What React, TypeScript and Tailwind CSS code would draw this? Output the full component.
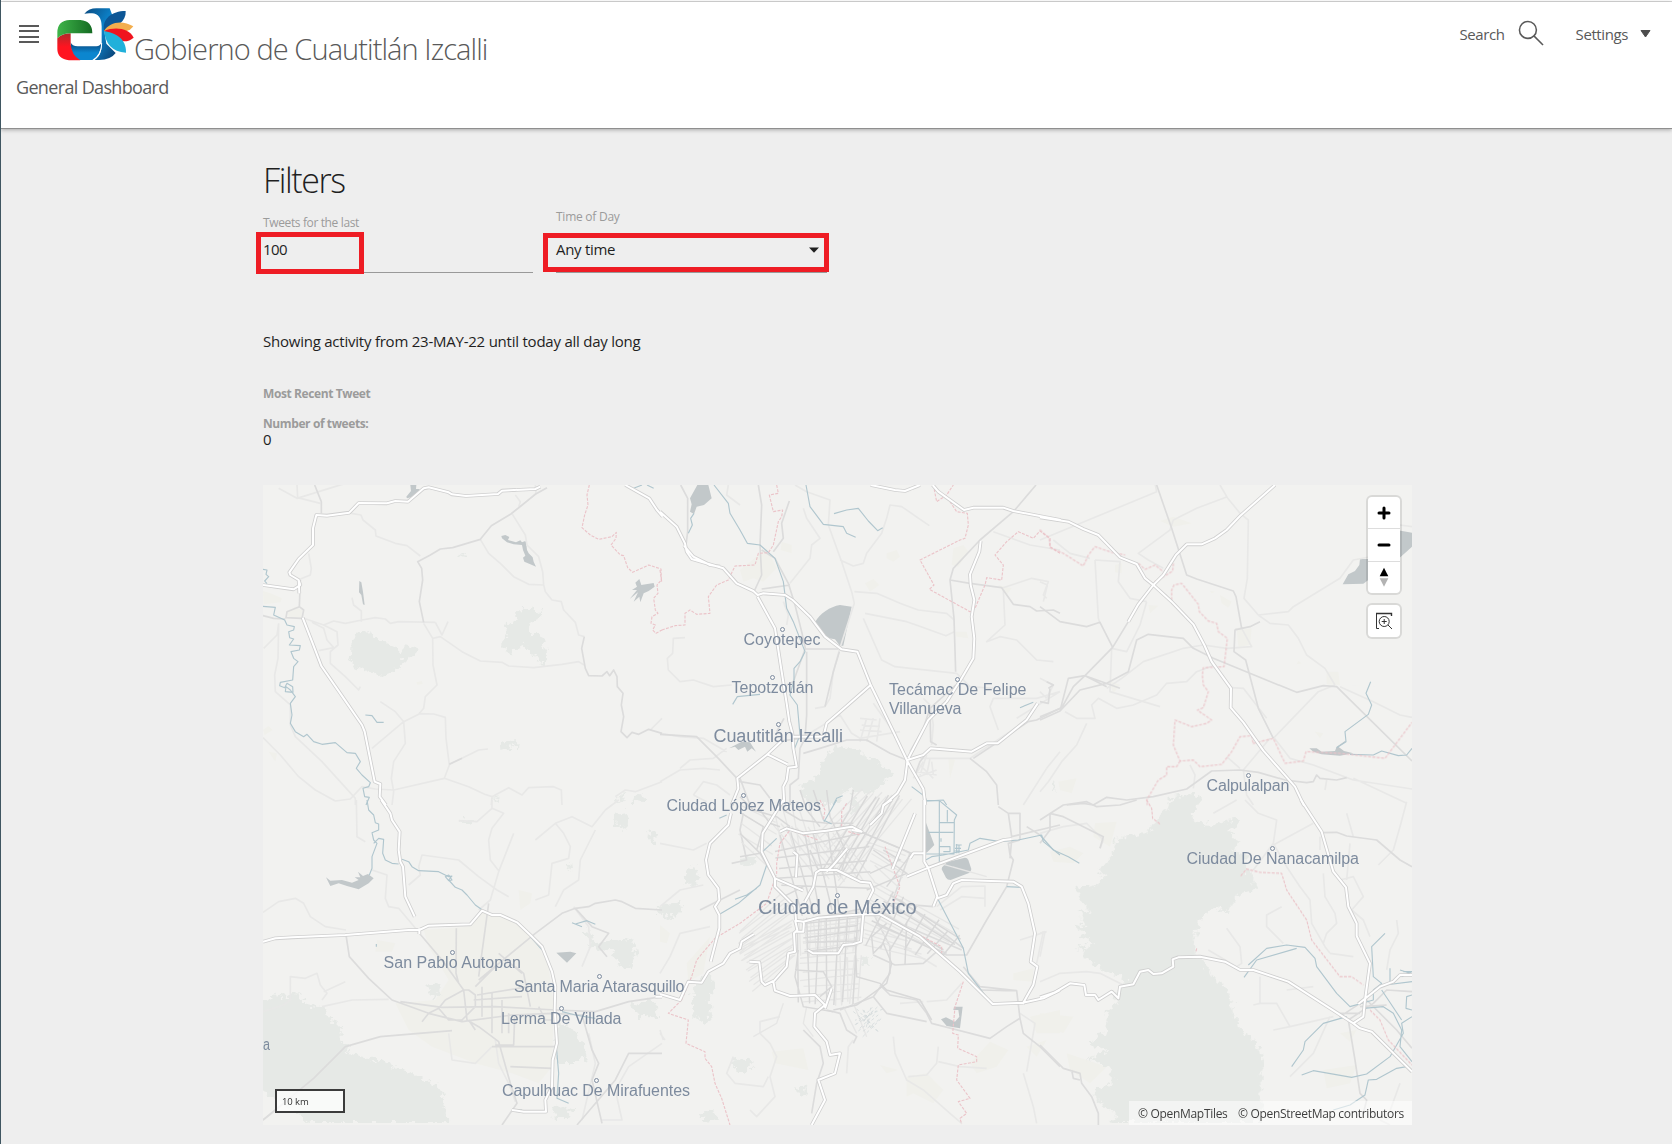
import React from "react";

type Tile = {
  x: number;
  y: number;
  wood?: string[];
  town?: string[];
  water?: string[];
  faint?: string[];
  minor?: string[];
  river?: string[];
  border?: string[];
  major?: string[];
};

/* Map geometry, split in sheets; each sheet is drawn at three units per pixel. */
const TILES: Tile[] = [
  {
    x: 262,
    y: 485,
    wood: [
      "M278 470L295 448L340 445L355 465L410 488L425 505L440 490L458 492L462 482L475 497L475 510L450 518L430 535L405 568L355 578L320 562L275 540Z",
      "M785 385L805 376L848 386L843 405L815 415L812 435L825 455L855 462L860 500L862 543L830 535L820 508L795 485L760 505L745 512L730 498L730 475L745 462L738 435L755 420L770 412L768 392Z",
      "M722 785L735 775L780 771L778 782L745 800L725 803Z",
      "M605 215L615 211L624 217L615 224Z",
      "M1070 950L1090 932L1105 930L1085 955ZM1115 950L1150 930L1155 945L1135 960L1115 960ZM700 948L725 940L715 950Z",
    ],
    town: ["M3 318L25 325L60 340L55 352L5 358Z", "M3 735L20 723L32 735L8 750Z", "M20 800L45 805L40 830Z", "M75 382L100 365L120 375L118 398L80 395Z", "M463 592L480 588L482 597L466 599Z"],
    water: [
      "M445 0H463L462 12L472 12L474 20L462 26L447 37L435 40L433 35L447 18Z",
      "M718 153L730 150L742 156L738 165L762 172L775 166L780 172L790 168L792 172L795 195L800 205L812 217L815 230L822 245L805 238L787 230L783 218L790 212L783 195L780 180L755 178L735 172L720 160Z",
      "M1132 282L1138 300L1175 294L1178 305L1160 318L1145 325L1135 352L1132 335L1115 350L1128 322L1103 342L1125 315L1110 315L1125 305L1120 293Z",
      "M292 288L298 292L303 320L308 360L303 358L298 330L291 322Z",
    ],
    faint: [
      "M268 85L297 90L303 105L340 135L342 153L400 175L435 182L475 213",
      "M655 163L680 205L715 235L755 275L800 298L845 300L842 260L830 215L795 180L790 150L750 86",
      "M845 300L850 320L870 345L898 350L905 375L940 412L950 450L967 455",
      "M125 400L185 420L215 408L250 415L300 405L340 398L370 402L385 415L410 410L520 412",
      "M512 460L535 455L600 500L655 528L720 532L740 543L815 548L900 538L950 530L966 540",
      "M485 415L512 460L513 540L525 600L490 635L485 670L470 688L425 710L330 790",
      "M470 686L515 687L550 697L552 760L562 840L547 880L395 915L340 912",
      "M355 650L400 680L425 710L430 775L395 830L388 880L395 920L390 960",
      "M562 838L600 820L650 795L678 792",
      "M547 880L620 905L668 928L690 935L688 960",
      "M668 928L690 935L740 908L780 930L800 908L875 905L898 915L900 960",
      "M3 758L55 810L110 875L160 915L220 948L265 942L300 905L340 912",
      "M250 -5L105 40L50 10M105 0L107 38L175 55M140 205L148 250L145 270L115 282M185 420L225 440L228 480L205 500L205 535L250 575L290 615L295 605M50 415L45 450L5 490M170 497L215 488L195 465L185 430L150 412",
      "M270 338L275 360L298 378L298 410M820 0L822 25L775 65L748 86M1200 700L1165 735M760 30L775 50L770 65M520 412L540 450L558 410M1060 935L1090 915L1120 920L1200 890",
      "M50 415L48 520L38 570L40 620L85 660L85 720L100 755L180 830L280 940V960",
    ],
    minor: [
      "M855 8L820 28L778 62L748 86L688 122L655 163L572 188L535 192L505 210L467 230L479 250L482 285L472 350L485 412",
      "M967 455L959 490L970 550L980 572L1020 573L1035 560L1043 572L1055 555L1065 575L1066 605L1083 625L1078 660L1085 695L1077 740L1095 758L1110 742L1130 748L1160 733L1200 745",
      "M158 0L178 50V85M115 285L112 365L75 380L72 398L120 400L125 375L112 365M3 392L35 400L70 402",
      "M562 838L600 820",
    ],
    river: [
      "M3 253L15 255L12 268L20 275L8 288L15 296M3 364L40 367L35 390L68 405L75 420L97 425L95 435L80 440L83 458L95 462L82 480L115 482L112 495L87 500L95 520L108 530L95 545L92 585L55 592L53 602L68 608L75 595L92 605L93 622L70 620L72 605L85 615L100 635L85 655L90 690L85 715L100 740L125 755L135 748L155 770L180 778L220 773L255 803L280 805L295 830L283 850L300 870L325 893L320 905L303 910L308 935L322 937L312 960",
      "M310 690L330 692L345 712L365 712",
      "M1115 10L1140 0M1155 0L1175 10",
    ],
    border: [
      "M982 0L975 30L978 60L968 90L960 128L985 150L1010 163L1050 155L1063 142L1062 160L1047 180L1075 210L1085 212L1097 248L1112 262L1160 240L1197 252L1198 285L1185 300L1188 325L1175 340L1180 375L1188 385L1170 395L1167 415L1180 420L1172 435L1182 445L1200 435",
    ],
    major: [
      "M835 5L820 12L720 17L708 27L612 33L570 28L560 22L500 7L485 10L438 50L400 48L375 55L290 54L262 83L195 92L163 90L153 130L153 180L110 222L82 262L85 270L110 285L115 300L95 313L3 300",
      "M110 285L112 325M122 398L150 470L178 543L245 640L300 720L308 740L320 800L338 890L355 897L353 935L372 960",
      "M1090 0L1115 14L1162 40L1185 75L1202 95",
    ],
  },
  {
    x: 660,
    y: 485,
    wood: [
      "M425 905L470 890L490 850L508 815L540 783L570 795L605 800L635 825L665 822L668 845L710 870L680 885L690 900L655 915L640 935L590 925L560 925L545 960L460 960L435 930Z",
      "M1195 890V930L1185 905Z",
    ],
    town: [
      "M240 255L320 190L350 250L310 290L280 280L250 290Z",
      "M365 170L395 180L395 205L362 195Z",
      "M680 205L710 195L720 215L700 230L680 220ZM880 190L910 180L925 200L895 245L875 240ZM615 295L640 282L658 300L630 320ZM1015 300L1055 310L1040 330ZM885 440L920 440L925 460L890 455ZM865 820L885 825L870 880Z",
    ],
    water: [
      "M112 0H145L155 40L132 60L110 65L102 87L90 80L95 58L90 40Z",
      "M465 412C480 385 510 365 540 360L575 365L550 482L540 483L525 463L497 458Z",
      "M207 790L245 770L270 772L288 800L275 790L262 800L255 785L235 795L225 785Z",
    ],
    faint: [
      "M405 0L440 20L510 45L505 120L545 230L575 320L583 355L538 495L520 560L510 640L495 665L465 670",
      "M540 225L580 243L610 235L620 205L665 145L680 100L690 60L725 65L808 122",
      "M583 320L650 325L720 355L775 375L860 385L883 405",
      "M615 385L740 410L858 452L883 440",
      "M0 745L60 755L130 760L200 800",
      "M75 458L40 460L38 505L22 520L25 555L60 590L100 585L160 605L215 600",
      "M610 400L665 525L705 545L890 565L930 605L1000 610M1015 735L990 665L1000 640L1130 640L1200 620M1070 700L1200 620M790 640L810 660L820 720L815 780",
      "M440 750L540 690L575 745L600 760L720 740M600 700L650 705M605 720L660 725M620 700L600 770M640 700L620 770M660 700L650 770M600 735L665 740M640 655L700 740",
      "M1000 140L1110 180L1200 195M1025 310L1115 280L1165 290L1150 330L1160 340M1030 315L1035 420L980 470L1020 455L1070 465L1130 525L1180 530M780 820L930 820L1080 720M1160 850L1090 960M1200 800L1160 850M0 890L60 855L130 850L180 855M60 850L90 825L160 820L200 790",
      "M205 0L200 30L240 60M430 70L440 100L480 160L455 180L450 220L390 295M380 420L385 390L370 350M780 840L820 880M790 830L760 880M800 810L780 870M810 820L800 870M815 830L820 870M770 860L830 870M765 880L830 855M100 930L130 890L170 900L210 930M100 930L140 950",
    ],
    minor: [
      "M62 0L83 40V140L78 180M295 0L305 60L300 180L305 270L283 318",
      "M305 195L345 220L385 295L405 360L425 440L436 490L400 590L380 600",
      "M388 48L365 115L370 160L340 200M305 312L390 300",
      "M1128 0L1060 80L960 165L880 250L870 285L882 400L887 560M870 285L930 295L1025 308L1060 358L1110 365L1130 378L1180 375L1200 385",
      "M887 600L810 670L790 730L750 800M810 670L812 770L830 780",
      "M436 492H535M440 500V690L435 760L420 790L415 880L390 900V960",
      "M430 805L480 790L560 765L620 765L690 805L740 825",
      "M810 790L780 830L765 870M930 820L980 860L1010 900L1015 960M940 820L1000 780L1105 710L1130 705L1200 670",
      "M0 748L110 755L175 820L240 890L300 900L330 940M240 880L270 960M350 770L420 760M372 700L350 740",
      "M495 665L520 560L538 500",
    ],
    river: [
      "M438 0L450 65L490 118L550 125L560 145L587 157M522 86L560 75L595 70L625 108L653 137L668 128",
      "M162 0L205 55L210 85L240 135L262 175L300 180L345 220L370 290L380 370L400 410L435 500L420 530L402 550V585L390 630L412 660L420 750L400 800L405 825",
      "M102 85L92 100L97 120L85 145M218 658L232 635L300 628M1080 668L1120 652M520 960L530 940L548 932M755 905L795 935L800 948L850 945L860 960",
    ],
    border: [
      "M350 0L355 25L328 30L340 80L368 75L365 95L355 110L340 180L325 203L295 205L285 240L225 243L205 285L170 300L145 335L150 385L110 388L90 375L75 385V420L45 422L0 437",
      "M820 0L830 50L860 30L880 0M870 50L890 80L922 85L925 120L915 160L900 165L780 225L822 300L808 313L930 380L945 370L975 300L980 278L1025 285L1030 240L1005 210L1040 170L1075 140L1120 160L1140 138L1170 160V185L1200 205",
      "M0 255L5 290",
    ],
    major: [
      "M0 80L50 125L75 175L80 200L95 222L190 250L230 295L280 318L293 330L310 325L375 330L398 345L450 395L495 455L545 493L592 500L632 600L700 740L742 828L790 912L796 960",
      "M72 182L100 215L150 240L180 245",
      "M293 335L345 430L365 560L380 655L388 710L397 745L400 790L410 845L385 848L380 885L370 905L373 960",
      "M368 765L320 810L232 880L235 910L215 960M322 808L383 838M395 755H490L500 715L535 685L632 600",
      "M632 0L705 15L735 18L780 0M818 0L835 20L912 75L940 68H1030L1060 78L1202 105",
      "M962 168L958 200L930 268L932 300L943 345L935 395L943 460L940 520L905 580L860 650L805 705L745 820",
      "M742 825L790 810L812 790L935 800L980 775H1013L1100 705L1133 655",
      "M742 830L735 885L712 925L670 962",
    ],
  },
  {
    x: 1040,
    y: 485,
    wood: ["M395 955L410 942L470 932L485 955L470 960H395Z"],
    town: [
      "M360 108L400 95L455 115L400 125ZM225 240L245 235L245 265L225 262ZM325 360L355 362L330 385ZM590 435L635 430L630 480L595 485ZM540 330L575 350L565 368L545 355ZM860 560L895 560L900 600L1015 605L860 598ZM55 890L110 880L95 925L60 915ZM825 740L850 745L840 760ZM510 318L525 320L515 325ZM775 528L785 535L770 538Z",
      "M205 585L240 600L220 625Z",
    ],
    water: [
      "M908 298L925 268L945 258L958 240L960 222H1050V290L985 285L970 296Z",
      "M1070 135L1116 143V185L1075 222Z",
      "M808 790L830 790L845 800L885 798L890 785L915 768L918 770L895 785L912 798L940 805L900 812L845 808L820 800Z",
    ],
    faint: [
      "M345 -5L350 20L0 165M540 0L562 38L600 85L625 105L622 280L612 340L655 390M562 35L470 70L400 105L390 135L295 205L325 225L370 250",
      "M655 390L745 380L760 365L900 280L940 225L1020 210M655 390L690 415L745 420L775 460L800 510L855 550L885 600M585 432L605 430L635 485L560 490L490 480L430 490L310 530L245 580L200 610",
      "M165 225L175 400L180 415M165 225L240 230L235 290L270 340L320 350M0 290L22 300L10 350M150 220L90 205L40 165M320 350L300 420L260 500L215 490L210 620L360 665",
      "M525 540L470 560L440 590L380 595L350 630L280 660L230 670L175 640L155 660L165 700L110 700L75 680M140 715L110 780L65 830L25 890L0 920M885 600L835 620L700 760M900 605L1000 650L1080 690L1116 697M700 755L750 820L820 840L940 885L1116 912M575 608L610 610L680 700M690 760L610 855L620 930L640 960M450 840L465 870L460 910M855 915L860 885M940 880L1100 955",
      "M1080 120L1116 125M0 580L40 600L20 640M0 620L20 640M560 815L600 850",
    ],
    minor: [
      "M350 0L395 130L440 270L470 282L580 318L588 335L605 430L585 435L582 500L617 525L655 670L700 760",
      "M605 430L630 425L660 410M0 365L60 410L140 425L180 412L218 487L265 410M218 487L135 572L85 580L62 670L0 695",
      "M0 705L60 678L120 615L200 595L265 560L290 465L325 448L430 460L460 490L520 520L770 622L850 602L890 605L1116 828",
      "M135 572L100 605L60 678M135 572L240 610M135 572L200 605",
      "M80 960L130 955L160 960L200 937L260 945L340 935L440 912L515 858L600 855L655 862L735 885L800 893L820 890L830 870L840 880L890 885L920 878",
      "M25 610L40 600L20 590M0 650L25 655L30 610",
    ],
    river: [
      "M992 590L978 625L995 660L985 688L915 740L918 770L890 788M930 808L1000 810L1025 798L1075 812L1100 810L1116 790",
    ],
    border: [
      "M0 135L28 160L30 188L70 205L130 243L145 210L165 185L215 202L255 210M295 235L315 253L345 240L370 260M400 235L398 258L345 290L342 300M395 345V315L402 300L425 295L475 358L478 380L505 408L530 415L535 440L562 460L552 545L490 548L487 570L490 600L505 620L490 668L472 675L515 705L500 715L455 725L405 705L400 780L420 828L460 825L480 845L545 838L575 800L600 755L635 752L640 778M420 828L410 845L380 845V870L355 885L320 945L322 960",
      "M640 775L700 760L735 835L790 828L798 800L900 805L1035 820L1116 712",
    ],
    major: [
      "M0 97L85 110L130 132L175 150L240 217L290 237L315 280L340 300L395 350L460 418L493 480L515 530L573 610L572 668L610 712L670 797L765 905L792 962",
      "M705 0L600 93L560 135L525 160L485 178H440L408 210L370 270L340 300L295 358L265 410",
    ],
  },
  {
    x: 262,
    y: 800,
    wood: [
      "M3 610L30 600L55 590L80 595L105 585L150 620L195 625L200 650L245 690L245 730L270 745L260 765L310 775L370 790L450 825L500 845L545 870L560 935L562 975H155L3 870Z",
      "M890 675L935 690L975 740L985 780L960 795H895L888 760Z",
      "M600 68L625 60L652 68L635 80L612 76ZM965 400L990 390L1000 425L1015 440L1065 420L1120 430L1130 470L1110 510L1080 505L1060 460L1015 455L980 445L1000 440ZM1120 620L1180 600L1200 640V670L1160 650L1140 670ZM925 190L940 195L942 220L925 210ZM1170 100L1190 110L1188 140L1168 130ZM880 930L915 920L945 935L925 960L885 960ZM500 560L545 555L540 590L520 600ZM1060 50L1110 45L1105 90L1070 85Z",
    ],
    town: [
      "M485 390L620 380L660 335L760 360L820 420L860 500L875 620L870 800L830 850L750 820L640 790L510 740L440 690L400 610L520 600L560 540L500 440ZM345 420L400 430L390 455L340 455Z",
      "M770 270L810 280L805 310L775 330Z",
    ],
    water: [
      "M192 232L205 242L240 240L270 248L290 240L278 232L295 232L288 215L303 228L318 222L335 235L320 250L290 268L255 258L230 250L205 258Z",
      "M883 458L925 455L943 460L915 488Z",
    ],
    faint: [
      "M3 337L50 305L100 295L125 310L145 350L190 380L252 390M283 0L285 110L310 125M330 210L375 225L370 295L380 320L410 325L465 390M470 200L480 165L590 180L650 230L705 270L740 290",
      "M690 0L690 25L645 65L590 62M690 25L725 40L690 85L680 120L685 180L710 212M755 100L710 215L685 300L650 330M820 300L860 285L870 190L920 175L925 140L905 100L880 70L930 50L990 80L1030 30L1070 0M880 320L905 270L950 240L955 180L1000 90M880 70L820 120",
      "M3 635L65 615L85 600L85 530L130 535L165 520L175 555L195 580L180 600M180 620L270 600L380 598M185 575L250 545M440 255L475 225L470 200",
      "M250 740L155 835L120 870L3 960M700 720L710 790L740 850L760 905M935 320L980 380L985 440L960 500M1200 730L1100 800L1060 870L1080 960L1020 960M980 700L1000 790L960 960M560 700L570 780L640 790L690 740",
    ],
    minor: [
      "M472 400L540 480L605 570L615 660L650 680L710 725L745 850L765 910L720 975M650 540L820 400L900 340L940 325L980 320L1000 310L1060 300L1080 305L1120 325L1200 330",
      "M252 405L262 470L320 535L390 600L500 640L600 665L750 645L870 640M415 605L540 622L700 620L880 630L1000 635L1100 605L1200 590",
      "M605 570L550 600L530 625L560 660L600 660L640 620V585L620 570ZM645 585L800 560M760 500L785 520L805 620M3 960L155 835L250 740L355 710L570 692M480 665L500 640L530 625M620 660L640 690M700 735H755L758 650M690 740L760 740H880M745 800L870 805M583 385L582 520L590 550M650 530L680 310M710 460L780 520",
      "M870 640L960 645L990 750L1010 790L990 840L1020 970M1200 760L1100 760L1060 840L945 975M635 600L780 590M660 560V650M690 580V700M720 600V700M740 640V700M830 620L850 660H870M640 560L700 500",
      "M940 325L990 380L1040 400L1010 440L1035 470",
    ],
    river: [
      "M315 0L320 30L335 45L340 68L350 72V90L330 98L335 120L345 130L330 170V205L322 225M335 130L350 115L365 118L362 160L370 180L390 190L410 192M420 178L440 185L450 200L470 212L530 215L560 230L570 228L560 240L580 262L600 270L615 285L640 315L658 328M550 230L560 225L570 240L560 242Z",
      "M930 368L960 380M940 372L975 362L1000 373M805 410L840 450M883 740L890 820L885 895L920 910M343 432V440M900 635L940 645L1000 655M750 930L780 930",
    ],
    major: [
      "M358 0L385 40L390 60L413 95L410 150L415 185L423 200L430 290L458 350",
      "M3 425L40 415L90 412L250 405L440 390L472 390L500 377L625 373L660 332L690 345H715L765 367L805 405L840 440L870 515L880 560L878 630L885 730L872 780L870 860L850 900L852 935H785L750 930M472 385V402",
      "M1180 590H1200",
    ],
  },
  {
    x: 660,
    y: 800,
    wood: [
      "M115 555L140 530L168 540L172 585L155 610L160 660L135 675L110 650L105 600Z",
      "M245 180L290 175L300 200L265 205ZM90 215L115 200L125 260L80 260ZM5 320L70 312L75 340L40 360L3 345ZM225 785L260 780L295 795L265 825L235 815ZM415 870L445 865L440 890L420 885ZM610 480L635 478L635 500L615 500ZM580 0L605 0L608 35L585 40ZM130 950L160 935L190 960L150 975Z",
    ],
    town: ["M335 755L430 745L445 810L345 790ZM740 830L800 820L850 870L820 910L760 880L740 890ZM660 795L715 810L680 820ZM930 790L990 725L1045 750L1010 800L950 820ZM1110 650L1200 630V700L1130 700ZM1100 740L1160 720L1130 770ZM80 490L150 410L130 520L85 545ZM1060 520L1120 505V545L1060 540ZM0 375L30 400L20 430L0 425Z"],
    water: [
      "M797 65L823 135L800 158L793 155Z",
      "M862 186L915 173Q922 173 925 180L934 207Q934 214 927 219L872 240Q862 240 858 233L845 208Q845 200 850 198Z",
      "M882 620L908 620L900 685L860 678L843 658L858 652L885 665L898 650L895 630L880 630Z",
    ],
    faint: [
      "M0 130L100 150L140 130M0 320L60 270L130 255M0 520L30 470L60 400L150 380M360 650L300 665V700L330 730L350 770L330 830L345 890L290 950L270 930M0 690L10 720M220 770L200 820L225 850L310 860L325 830M700 710L705 760L740 840L790 870L870 940L905 970M745 830L800 825L830 790L835 740M835 785L900 800L980 805M560 820L565 740L580 720",
      "M730 440L830 500M830 320L905 260L975 258V320M840 330L905 290L975 295M1090 820L1120 920L1130 970M1100 815L1125 670L1080 640M1150 395L1130 490M1080 420L1160 395M0 700L15 720",
      "M800 605L860 600L905 550M720 610L790 605",
    ],
    minor: [
      "M1080 120L1045 130L1050 165L1060 180L1040 260L980 360L920 465L860 465L830 455L790 490L705 495L640 465",
      "M590 90L720 145L750 160L700 295L720 300L910 445M1015 20L1045 40L1055 110L1200 75M1045 40H1080V120M540 630L640 590L690 520V440L640 340M660 555L690 585L770 600L800 640L815 670L990 715L1040 680L1080 655",
      "M910 500L960 560L1070 572L1080 655L1090 700L1140 740L1180 780L1200 800M1070 572H1040L960 570M640 590L680 640L800 665",
      "M430 690L480 740L490 790L470 850L455 940M500 630L540 640L560 690L590 710L580 730M120 330L240 270M215 190L260 180L240 90L250 40",
      "M1050 175L1055 120M1140 105L1100 80M660 345L905 450M650 375L860 460M640 340L700 310L820 320",
    ],
    river: [
      "M795 2H838L890 45L883 60L882 162H797M838 2V188M838 68H883M805 97H880M843 115V125M837 140H870V155H850M862 30V65M887 135H905M885 145H903M883 153H900M890 132V160M897 135V160M797 180L815 170L850 165L925 150L930 130L960 115L1020 125L1075 120L1145 105L1150 125L1200 165M835 300L910 445L925 520L990 605M1040 260L1085 262",
      "M180 342L235 310L300 255L320 195M308 155L350 115M225 298L260 285L290 265M492 65L530 0M490 60L515 72M178 55L200 45",
    ],
    border: [
      "M65 600L25 640L85 660L78 730L135 755V775L155 800L165 850L185 895L210 975M65 600L95 530L110 480L165 415L240 370L320 310L350 220L350 190L360 130L390 90L475 120M480 0L495 30L490 60M545 80V35L560 10M565 95L600 105M675 140L720 260L700 310M730 380L845 440V460M910 545L885 620L878 700L895 705L893 745L950 770V785L895 795L890 840L930 895L895 905L920 940L900 955L905 972",
    ],
    major: [
      "M213 40L205 75L150 130L138 180L145 225L175 265L178 300L165 320L178 345V385L152 485",
      "M370 0L308 100L305 155L345 235V260L405 320L408 362L430 365L475 353L605 343L660 343L780 410L900 515L998 612L1090 608L1150 595L1200 570",
      "M345 235L430 272M360 95L380 85L430 100L500 92L575 80L605 95L575 90M630 75L665 40L670 15L695 0M400 155L412 165L408 232M500 215L520 195L562 145M765 40L697 208M740 230L800 205L1030 120L1055 117M793 0V185L805 205L832 290L820 320M832 295L860 285L880 250L905 240L1060 245L1085 260L1105 310L1125 400L1112 485L1132 500L1120 555L1100 590L1088 612M750 175L760 160H790",
      "M435 305L460 260L468 218L480 210H530L560 225L600 245L630 248L640 270L625 300L610 340L603 425L580 432L550 435L535 460H460L443 450M405 360L412 390L402 400L405 455L385 460L380 500L340 545L345 572L390 588L465 585L495 615L465 640L463 680L500 725L510 765L540 760L525 820L475 840L495 900L455 975M515 565L495 625M405 395H430L432 365M0 582L60 600L85 545L125 548L145 515L190 490L210 460L240 445L245 425L282 402M268 485L298 487L305 545L315 555L340 543",
    ],
  },
  {
    x: 1040,
    y: 800,
    wood: [
      "M360 72L400 10L415 0H490L465 60L485 75L550 80L575 65L605 62L605 85L570 100L610 130L590 160L625 170L625 215L655 235L650 275L600 290L575 340L530 330L485 370L480 400L470 440L475 475L500 485L520 530L560 560L580 600L590 650L620 700L660 735L680 790L670 850L680 975H220L240 950L180 905L170 880L230 860L225 810L145 780L210 760L150 735L205 700L210 650L200 640L235 620L230 590L270 550L170 500L120 450L165 440L110 380L150 385L120 340L165 350L110 270L170 265L205 235L180 215L215 190L245 115L330 105Z",
    ],
    town: ["M165 70L230 65L210 140L160 110ZM30 155L90 140L130 160L100 190L40 185ZM0 640L100 650L70 700L0 670ZM80 760L200 800L150 850L90 810ZM850 810L950 795L930 850L860 865ZM900 700L950 690L930 725Z"],
    faint: [
      "M0 545L60 520L140 515L180 520L250 555M0 100L70 80L140 70L190 120L180 145M615 0L655 40L710 60L700 130L640 210M820 70L700 135M700 130L740 200L780 260L810 300L815 370L855 440L870 460M725 320L680 345L680 380L730 430M850 430L860 400L890 370L885 340L855 290L850 220M900 240L940 230L970 290L935 330L970 360L990 410M505 450L590 500L605 490L600 440L560 385M660 530L660 610L640 615M660 610L710 610L750 680L880 650M750 680L700 690",
      "M1100 5L1080 80L1060 150L1015 195M1070 360L1075 400L1050 450L1040 510M840 150L840 110M930 130L920 240M920 40L940 110M520 40L590 0M0 400L15 395L0 470M870 650L820 760L750 830M1020 960L1050 975M1080 850L1040 960",
      "M870 460L940 470M820 560L740 570",
    ],
    minor: [
      "M0 60L70 15L140 5L170 20L240 15L290 0M0 130L30 90L30 40M30 40L70 50L190 110L180 145",
      "M850 98L890 97L920 108L1010 120L1080 180L1116 200M0 735L70 805L120 820L125 850L155 890L175 940V975M95 810L100 835L120 840",
      "M925 660L945 780L960 880L980 900L970 940M960 610L900 650L925 660L1000 610L1040 570L1116 575M980 600L1070 690L1116 745M960 620L1040 615M900 640L960 640",
    ],
    river: [
      "M0 105L40 150L85 170L118 190M612 532L650 480L770 445M625 495L680 445L740 435L795 442L825 475L830 500L890 580L930 620L1000 600L1000 570L1025 550L1000 530L995 440L1035 400M755 800L790 750L795 725L850 670L920 650M785 825L820 812L935 832L980 822L1050 770L1090 700L1085 670L1116 650M970 625L1030 620L1060 640L1085 690L1080 740L1116 785M1025 570L1085 660M1116 585L1100 590L1098 625L1116 630M1050 505V550M1035 555L1116 545M1090 515H1116L1085 530M880 930L930 915L975 885L985 840L1010 838L1070 805L1100 800M1080 510L1110 520",
    ],
    border: [
      "M320 0L335 25L338 55L360 72M602 228L620 207L660 217L725 220L740 270L800 360L815 420L900 530L935 530L970 555M990 630L1020 660L1045 720L1116 795M470 445L468 455",
    ],
    major: [
      "M783 0L845 95L880 215L918 262L925 320L950 370V408L990 490L975 600L970 650L940 670",
      "M0 592L45 577L90 550L133 555L138 585H165L175 600L215 575L235 595L240 560L280 553L300 515L325 510L340 522L365 520L400 500L398 478L415 472L480 470L555 485L600 510H640L745 545L940 670L960 685L995 695L1116 815",
      "M955 612L1020 560L1060 545L1080 525H1116",
    ],
  },
];

const line = (x1: number, y1: number, x2: number, y2: number) => `M${x1} ${y1}L${x2} ${y2}`;
const spread = (n: number, a: number[], b: number[]) =>
  Array.from({ length: n }, (_, i) => {
    const t = i / (n - 1);
    const m = a.map((v, k) => v + (b[k] - v) * t + Math.sin(i * 3.7 + k * 1.9) * 5);
    return line(m[0], m[1], m[2], m[3]);
  }).join("");

/* Urban street mesh of the capital. */
const STREETS_DARK = [
  spread(7, [172, 390, 178, 640], [355, 370, 335, 640]),
  spread(6, [195, 385, 365, 360], [195, 480, 350, 470]),
  spread(6, [245, 240, 385, 20], [350, 260, 480, 20]),
  spread(5, [120, 130, 190, 380], [260, 130, 300, 360]),
  spread(5, [105, 180, 380, 130], [120, 290, 390, 290]),
  spread(7, [460, 300, 380, 470], [660, 440, 600, 500]),
  spread(4, [450, 310, 665, 450], [400, 390, 590, 490]),
  "M260 0L270 80L320 190L300 260M360 125L515 190L440 290M175 480L165 560L190 650L250 660L280 665M280 660L350 645L440 580L455 520L430 460L400 490L395 440L440 400M345 440L350 560L420 580L440 600L540 630L575 690M500 395L495 525M0 130L60 190L100 260M5 70L70 110L50 180M0 200L60 190M130 320L190 290M380 300L500 250L400 180M390 250L480 210L430 180M165 540L250 545L275 590L240 620",
  "M0 20L40 60L110 80L150 110M60 60L90 100L120 110M130 60L180 90L260 100L340 100M180 0L200 60L240 110M210 180L235 240M220 0L250 90M340 0L330 60L300 110",
];
const STREETS_LIGHT = [
  spread(13, [178, 390, 185, 500], [365, 370, 350, 480]),
  spread(9, [190, 385, 365, 365], [190, 490, 350, 470]),
  spread(11, [0, 470, 150, 400], [40, 600, 165, 500]),
  spread(8, [0, 420, 130, 310], [0, 510, 160, 400]),
  spread(9, [230, 130, 370, 0], [300, 290, 510, 30]),
  spread(9, [100, 100, 230, 260], [300, 130, 400, 280]),
  spread(7, [180, 500, 350, 490], [190, 640, 360, 620]),
  spread(7, [290, 500, 290, 650], [365, 500, 350, 630]),
  spread(5, [380, 150, 500, 200], [400, 230, 480, 290]),
  spread(6, [400, 270, 660, 420], [380, 360, 600, 490]),
  spread(5, [100, 40, 130, 180], [200, 30, 240, 180]),
  spread(5, [0, 40, 110, 100], [0, 160, 90, 230]),
  spread(5, [370, 460, 560, 510], [370, 400, 480, 440]),
  "M130 640L110 700L40 740M200 650L190 700L220 740M310 650L350 730M340 640L380 740M600 220L740 260",
];
const WETLAND = spread(8, [340, 660, 420, 730], [425, 655, 350, 690]) + spread(6, [345, 700, 400, 655], [370, 735, 425, 690]);

const PLACES: { t: string; x: number; y: number; w: number; s: number; cx?: number; cy?: number }[] = [
  { t: "Coyotepec", x: 743.5, y: 645, w: 77, s: 16, cx: 782.5, cy: 629.5 },
  { t: "Tepotzotlán", x: 731.5, y: 693, w: 82, s: 16, cx: 772.5, cy: 677.5 },
  { t: "Cuautitlán Izcalli", x: 713.5, y: 742, w: 129.5, s: 18, cx: 778.5, cy: 724.5 },
  { t: "Tecámac De Felipe", x: 889, y: 695, w: 137.5, s: 16, cx: 957.5, cy: 679.5 },
  { t: "Villanueva", x: 889, y: 714, w: 72.5, s: 16 },
  { t: "Calpulalpan", x: 1206.5, y: 791, w: 83, s: 16, cx: 1248.5, cy: 775.5 },
  { t: "Ciudad López Mateos", x: 666.5, y: 811, w: 154.5, s: 16, cx: 743.5, cy: 795.5 },
  { t: "Ciudad De Nanacamilpa", x: 1186.5, y: 864, w: 172.5, s: 16, cx: 1272.5, cy: 848.5 },
  { t: "Ciudad de México", x: 758, y: 913.5, w: 158.5, s: 20, cx: 837.5, cy: 895.5 },
  { t: "San Pablo Autopan", x: 383.5, y: 968, w: 137.5, s: 16, cx: 452.5, cy: 952.5 },
  { t: "Santa Maria Atarasquillo", x: 514, y: 992, w: 170.5, s: 16, cx: 599.5, cy: 976.5 },
  { t: "Lerma De Villada", x: 501, y: 1024, w: 120.5, s: 16, cx: 561.5, cy: 1008.5 },
  { t: "Capulhuac De Mirafuentes", x: 502, y: 1096, w: 188, s: 16, cx: 596.5, cy: 1080.5 },
  { t: "a", x: 263, y: 1049.5, w: 7, s: 16 },
];

function Layer({ k, ...rest }: { k: Exclude<keyof Tile, "x" | "y"> } & React.SVGProps<SVGGElement>) {
  return (
    <g fill="none" strokeLinejoin="round" {...rest}>
      {TILES.map((t, i) => (
        <g key={i} transform={`translate(${t.x} ${t.y}) scale(.33333)`}>
          <path d={(t[k] ?? []).join("")} />
        </g>
      ))}
    </g>
  );
}

function MapCanvas() {
  return (
    <svg className="block h-[640px] w-[1149px]" viewBox="263 485 1149 640">
      <defs>
        <filter id="ragged" x="0" y="0" width="1" height="1">
          <feTurbulence type="fractalNoise" baseFrequency="0.16" numOctaves="3" seed="4" />
          <feDisplacementMap in="SourceGraphic" scale="13" xChannelSelector="R" yChannelSelector="G" />
        </filter>
      </defs>
      <rect x="263" y="485" width="1149" height="640" fill="#f2f2f0" />
      <Layer k="town" fill="#f0f0eb" />
      <g transform="translate(-3 -2)">
        <Layer k="wood" fill="#e6e9e6" filter="url(#ragged)" />
      </g>
      <Layer k="water" fill="#c2c8ca" />
      <Layer k="faint" stroke="#e8e8e7" strokeWidth="5" />
      <Layer k="minor" stroke="#dcdcdc" strokeWidth="5" />
      <g transform="translate(740 790) scale(.33333)" fill="none">
        <path d={STREETS_LIGHT.join("")} stroke="#e6e6e5" strokeWidth="4" />
        <path d={STREETS_DARK.join("")} stroke="#d9d9d9" strokeWidth="4.5" />
        <path d={WETLAND} stroke="#cfd6d8" strokeWidth="2" strokeDasharray="9 8" />
      </g>
      <Layer k="river" stroke="#b0c6ce" strokeWidth="3.4" />
      <Layer k="border" stroke="#ebc4c9" strokeWidth="3.4" strokeDasharray="9 4" />
      <Layer k="major" stroke="#cfcfcf" strokeWidth="11" />
      <Layer k="major" stroke="#ffffff" strokeWidth="6" />
      <g fontFamily="'Liberation Sans', Arial, sans-serif" fill="#7d8b9e">
        {PLACES.map((p) => (
          <g key={p.t}>
            {p.cx && <circle cx={p.cx} cy={p.cy} r="2" fill="#f6f6f6" stroke="#7d8b9e" strokeWidth="1" />}
            <text x={p.x} y={p.y} fontSize={p.s} textLength={p.w} lengthAdjust={p.t.length === 1 ? "spacingAndGlyphs" : "spacing"}>
              {p.t}
            </text>
          </g>
        ))}
      </g>
    </svg>
  );
}

function Logo() {
  return (
    <svg className="block h-[54px] w-[78px]" viewBox="170 20 234 162">
      <defs>
        <linearGradient id="lg" x1="0" x2="1">
          <stop offset="0" stopColor="#3fb54a" />
          <stop offset="1" stopColor="#146b22" />
        </linearGradient>
        <linearGradient id="lr" x1="0" y1="0" x2="0" y2="1">
          <stop offset="0" stopColor="#b02a2c" />
          <stop offset=".5" stopColor="#ff1420" />
        </linearGradient>
        <linearGradient id="lb" x1="0" y1="0" x2="1" y2="1">
          <stop offset="0" stopColor="#0b4a80" />
          <stop offset=".5" stopColor="#0c84cc" />
          <stop offset="1" stopColor="#0a3d6e" />
        </linearGradient>
        <linearGradient id="lu" x1="0" y1="0" x2="0" y2="1">
          <stop offset="0" stopColor="#0a4379" />
          <stop offset=".6" stopColor="#0b86cf" />
        </linearGradient>
      </defs>
      <path d="M252 40Q266 24 288 24H328L338 50L312 92L318 130L346 158Q332 178 296 179H282Q305 165 304 130V78Q303 40 275 39Q262 38 252 40Z" fill="url(#lb)" />
      <path d="M211 126Q215 138 232 138H288Q300 137 303 128Q303 162 276 179H236Q214 168 211 140Z" fill="url(#lu)" />
      <path d="M171 114Q186 99 211 99V132Q214 166 240 180H206Q171 176 171 146Z" fill="url(#lr)" />
      <path d="M171 114V96Q172 60 208 59H240Q276 62 276 99H211Q186 99 171 114Z" fill="url(#lg)" />
      <path d="M311 92C304 56 334 32 376 32C378 64 350 80 311 92Z" fill="#0d5796" />
      <path d="M311 92C328 64 366 58 399 78C382 102 346 98 311 92Z" fill="#f3ae4e" />
      <path d="M311 92C346 78 386 84 400 112C376 134 340 120 311 92Z" fill="#f0141e" />
      <path d="M311 92C346 98 378 114 377 157C334 154 316 130 311 92Z" fill="#21b0da" />
      <path d="M304 128Q304 164 280 180" stroke="#fff" strokeWidth="3" fill="none" />
    </svg>
  );
}

function Header() {
  return (
    <header className="flex h-[127px] justify-between border-b border-[#8f8f8f] bg-white text-[#595959] shadow-[0_1px_4px_rgba(0,0,0,0.3)]">
      <div className="pl-[15px]">
        <div className="flex h-[65px] items-start">
          <div className="mt-[23px] ml-[3px] flex w-5 flex-col gap-[3.3px]">
            <i className="h-[2px] bg-[#595959]" />
            <i className="h-[2px] bg-[#595959]" />
            <i className="h-[2px] bg-[#595959]" />
            <i className="h-[2px] bg-[#595959]" />
          </div>
          <div className="mt-[5px] ml-[18px]">
            <Logo />
          </div>
          <h1 className="mt-[27px] -ml-[1px] text-[29px] leading-[40px] font-light tracking-[-0.92px] whitespace-nowrap">Gobierno de Cuautitlán Izcalli</h1>
        </div>
        <h2 className="mt-[8px] text-[18px] leading-6 tracking-[-0.66px] whitespace-nowrap">General Dashboard</h2>
      </div>
      <div className="mt-[16px] mr-[21px] flex h-8 items-center text-[15px] tracking-[-0.4px]">
        <span className="-ml-px">Search</span>
        <svg className="-mt-[2px] ml-[13px] h-[26px] w-[26px]" viewBox="0 0 27 27" fill="none" stroke="#595959" strokeWidth="1.6">
          <circle cx="10.3" cy="10.3" r="8.8" />
          <path d="M16.5 16.5L26 26" />
        </svg>
        <span className="ml-[32px]">Settings</span>
        <svg className="ml-3 h-2 w-[11px]" viewBox="0 0 11 8">
          <path d="M1 .5H10L5.5 7Z" fill="#4d4d4d" stroke="#4d4d4d" />
        </svg>
      </div>
    </header>
  );
}

function MapControls() {
  return (
    <div className="absolute top-[12px] right-[12px] flex flex-col gap-3">
      <div className="flex h-[96px] w-8 flex-col divide-y divide-[#dddddd] rounded-[4px] bg-white shadow-[0_0_0_2px_rgba(0,0,0,0.1)]">
        <button className="flex flex-1 items-center justify-center">
          <svg width="14" height="14" viewBox="0 0 14 14" stroke="#000" strokeWidth="3" strokeLinecap="round">
            <path d="M7 2V12M2 7H12" />
          </svg>
        </button>
        <button className="flex flex-1 items-center justify-center">
          <svg width="14" height="14" viewBox="0 0 14 14" stroke="#000" strokeWidth="3" strokeLinecap="round">
            <path d="M2 7H12" />
          </svg>
        </button>
        <button className="flex flex-1 items-center justify-center">
          <svg width="10" height="20" viewBox="0 0 10 20">
            <path d="M.7 9.2L5 .8L9.3 9.2Z" fill="#000" />
            <path d="M.7 11.3H9.3L5 19.7Z" fill="#b3b3b3" />
          </svg>
        </button>
      </div>
      <button className="flex h-8 w-8 items-center justify-center rounded-[4px] bg-white shadow-[0_0_0_2px_rgba(0,0,0,0.1)]">
        <svg width="18" height="18" viewBox="0 0 18 18" fill="none" stroke="#333" strokeWidth="1">
          <path d="M4 16.5H1.5V1.5" />
          <path d="M1 1.5H16.5V4" strokeWidth="1.4" />
          <circle cx="9.2" cy="9.5" r="5" />
          <path d="M9.2 7V12M6.7 9.5H11.7M13 13L17 17" />
        </svg>
      </button>
    </div>
  );
}

export default function App() {
  return (
    <div className="h-[1144px] w-[1672px] overflow-hidden border-l border-[#3f5661] bg-[#eeeeee] font-['Open_Sans',sans-serif]">
      <div className="h-px bg-white" />
      <div className="h-px bg-[#d9d9d9]" />
      <Header />
      <main className="ml-[262px] w-[1149px] text-[#1f1f1f]">
        <h3 className="pt-[27px] text-[34px] leading-[48px] font-light tracking-[-1.4px]">Filters</h3>
        <div className="flex h-[69px] gap-[23px]">
          <div className="relative w-[270px] border-b border-[#999999]">
            <label className="mt-[11px] block text-[12px] leading-4 tracking-[-0.37px] text-[#9b9b9b]">Tweets for the last</label>
            <div className="mt-[8px] text-[15px] leading-5 tracking-[-0.6px]">100</div>
            <div className="absolute top-[28px] -left-[7px] h-[42px] w-[108px] border-[5px] border-[#ee1c24]" />
          </div>
          <div className="relative w-[271px] border-b border-[#999999]">
            <label className="mt-[5px] block text-[12px] leading-4 tracking-[-0.25px] text-[#9b9b9b]">Time of Day</label>
            <div className="mt-[14px] flex items-center justify-between pr-[8px] text-[15px] leading-5 tracking-[-0.3px]">
              Any time
              <svg className="mt-[2px]" width="10" height="6" viewBox="0 0 10 6">
                <path d="M0 .5H10L5 5.8Z" fill="#1f1f1f" />
              </svg>
            </div>
            <div className="absolute top-[29px] -left-[13px] h-[39px] w-[286px] border-[5px] border-[#ee1c24]" />
          </div>
        </div>
        <p className="mt-[58px] text-[15px] leading-5 tracking-[-0.23px] whitespace-nowrap">Showing activity from 23-MAY-22 until today all day long</p>
        <p className="mt-[35px] text-[12px] leading-4 font-bold tracking-[-0.4px] text-[#9b9b9b]">Most Recent Tweet</p>
        <p className="mt-[14px] text-[12px] leading-4 font-bold tracking-[-0.4px] text-[#9b9b9b]">Number of tweets:</p>
        <p className="-mt-px text-[15px] leading-4">0</p>
        <section className="relative mt-[38px] h-[640px] w-[1149px] overflow-hidden">
          <MapCanvas />
          <MapControls />
          <div className="absolute bottom-[12px] left-[12px] flex h-6 w-[70px] items-center border-2 border-[#3b3b3b] bg-white/75 px-[5px] pt-[2px] text-[9.5px] tracking-[-0.1px] text-[#333333]">10 km</div>
          <div className="absolute right-0 bottom-0 flex h-6 w-[283px] items-center justify-between bg-white/50 pt-[2px] pr-[8px] pl-[9px] text-[12px] tracking-[-0.31px] whitespace-nowrap text-[#404040]">
            <span>© OpenMapTiles</span>
            <span>© OpenStreetMap contributors</span>
          </div>
        </section>
      </main>
    </div>
  );
}
